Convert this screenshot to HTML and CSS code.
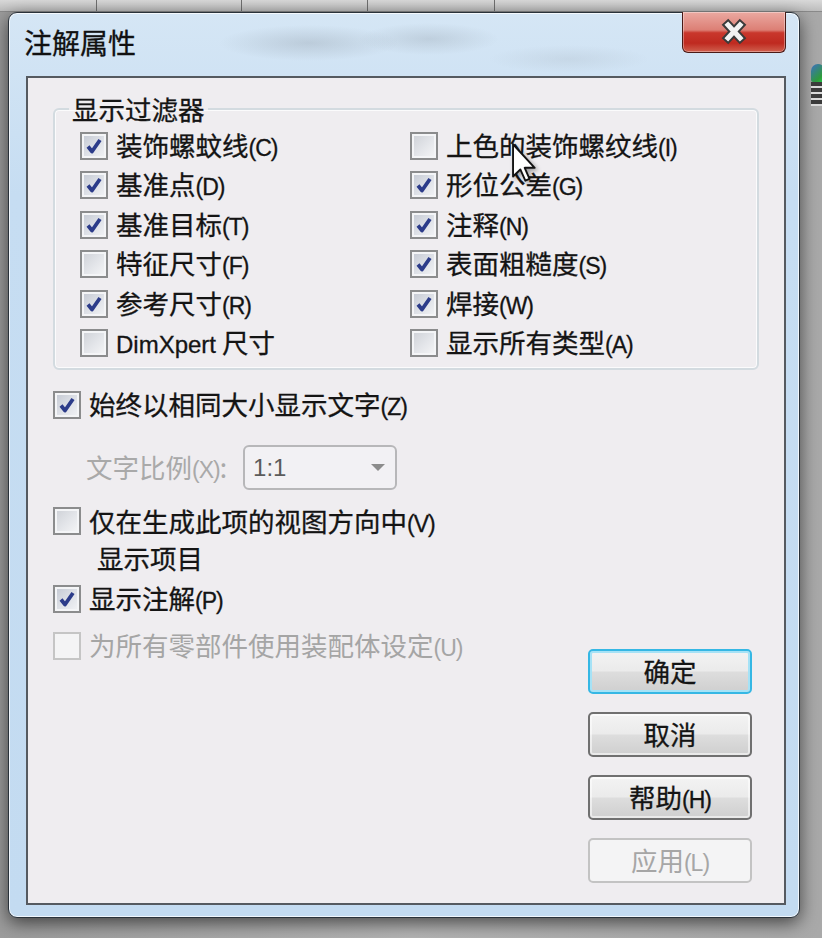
FILE: index.html
```html
<!DOCTYPE html>
<html lang="zh-CN">
<head>
  <meta charset="UTF-8">
  <meta name="viewport" content="width=device-width, initial-scale=1.0">
  <title>注解属性</title>
  <link rel="stylesheet" href="styles.css">
</head>
<body>
  <div class="desktop">
    <div class="taskstrip">
      <span class="tab tab-a"></span>
      <span class="tab tab-b"></span>
      <span class="tab tab-c"></span>
      <span class="tab tab-d"></span>
      <span class="tab tab-rest"></span>
    </div>
    <div class="side-icon"><span class="globe"></span><span class="sheet"></span></div>

    <div class="window">
      <div class="titlebar">
        <div class="title">注解属性</div>
        <div class="close">
          <svg width="104" height="41" viewBox="0 0 104 41">
            <path d="M46 14 L58 27 M58 14 L46 27" stroke="#3a3a3a" stroke-width="9" stroke-linecap="square" fill="none"/>
            <path d="M46 14 L58 27 M58 14 L46 27" stroke="#f2f2f2" stroke-width="5" stroke-linecap="square" fill="none"/>
          </svg>
        </div>
      </div>

      <div class="client">
        <fieldset class="group">
          <legend>显示过滤器</legend>
          <div class="filters">
            <label class="opt"><span class="cb"><svg viewBox="0 0 20 20"><path d="M4 10.5 L8 15.5 L16 4"/></svg></span><span class="txt">装饰螺蚊线<span class="key">(C)</span></span></label>
            <label class="opt"><span class="cb unchecked"></span><span class="txt">上色的装饰螺纹线<span class="key">(I)</span></span></label>
            <label class="opt"><span class="cb"><svg viewBox="0 0 20 20"><path d="M4 10.5 L8 15.5 L16 4"/></svg></span><span class="txt">基准点<span class="key">(D)</span></span></label>
            <label class="opt"><span class="cb"><svg viewBox="0 0 20 20"><path d="M4 10.5 L8 15.5 L16 4"/></svg></span><span class="txt">形位公差<span class="key">(G)</span></span></label>
            <label class="opt"><span class="cb"><svg viewBox="0 0 20 20"><path d="M4 10.5 L8 15.5 L16 4"/></svg></span><span class="txt">基准目标<span class="key">(T)</span></span></label>
            <label class="opt"><span class="cb"><svg viewBox="0 0 20 20"><path d="M4 10.5 L8 15.5 L16 4"/></svg></span><span class="txt">注释<span class="key">(N)</span></span></label>
            <label class="opt"><span class="cb unchecked"></span><span class="txt">特征尺寸<span class="key">(F)</span></span></label>
            <label class="opt"><span class="cb"><svg viewBox="0 0 20 20"><path d="M4 10.5 L8 15.5 L16 4"/></svg></span><span class="txt">表面粗糙度<span class="key">(S)</span></span></label>
            <label class="opt"><span class="cb"><svg viewBox="0 0 20 20"><path d="M4 10.5 L8 15.5 L16 4"/></svg></span><span class="txt">参考尺寸<span class="key">(R)</span></span></label>
            <label class="opt"><span class="cb"><svg viewBox="0 0 20 20"><path d="M4 10.5 L8 15.5 L16 4"/></svg></span><span class="txt">焊接<span class="key">(W)</span></span></label>
            <label class="opt"><span class="cb unchecked"></span><span class="txt"><span class="latin">DimXpert</span> 尺寸</span></label>
            <label class="opt"><span class="cb unchecked"></span><span class="txt">显示所有类型<span class="key">(A)</span></span></label>
          </div>
        </fieldset>

        <div class="lower">
          <div class="options">
            <label class="opt row-same"><span class="cb"><svg viewBox="0 0 20 20"><path d="M4 10.5 L8 15.5 L16 4"/></svg></span><span class="txt">始终以相同大小显示文字<span class="key">(Z)</span></span></label>

            <div class="scale-row">
              <span class="scale-label">文字比例<span class="key">(X)</span>:</span>
              <div class="combo"><span class="combo-value">1:1</span><span class="combo-arrow"></span></div>
            </div>

            <label class="opt multi"><span class="cb unchecked"></span><span class="txt">仅在生成此项的视图方向中<span class="key">(V)</span><span class="line2">显示项目</span></span></label>
            <label class="opt row-notes"><span class="cb"><svg viewBox="0 0 20 20"><path d="M4 10.5 L8 15.5 L16 4"/></svg></span><span class="txt">显示注解<span class="key">(P)</span></span></label>
            <label class="opt row-asm disabled"><span class="cb unchecked"></span><span class="txt">为所有零部件使用装配体设定<span class="key">(U)</span></span></label>
          </div>

          <div class="buttons">
            <button class="btn default">确定</button>
            <button class="btn">取消</button>
            <button class="btn">帮助<span class="key">(H)</span></button>
            <button class="btn disabled">应用<span class="key">(L)</span></button>
          </div>
        </div>

        <svg class="cursor" width="25" height="40" viewBox="0 0 12 19">
          <polygon points="0.5,0.5 0.5,16 4,12.6 6.4,18 8.4,17.1 6.1,11.8 10.9,11.8" fill="#fff" stroke="#111" stroke-width="0.9" stroke-linejoin="round"/>
        </svg>
      </div>
    </div>
  </div>
</body>
</html>
```

FILE: styles.css
```css
body {
  margin: 0;
  background: #b1b1b1;
  font-family: "Noto Sans CJK SC", sans-serif;
  color: #141414;
}

.desktop {
  width: 822px;
  height: 938px;
  overflow: hidden;
  position: relative;
  display: flex;
  flex-direction: column;
  background: linear-gradient(to right, #9c9c9c 0%, #b4b4b4 50%, #a9a9a9 100%);
}

/* strip of the app behind the dialog */
.taskstrip {
  height: 12px;
  display: flex;
  background: linear-gradient(#d9d9d9, #bdbdbd);
  border-bottom: 1px solid #8a8a8a;
  box-sizing: border-box;
}

.tab {
  border-right: 1px solid #6f6f6f;
}

.tab-a { width: 96px; }
.tab-b { width: 144px; }
.tab-c { width: 125px; }
.tab-d { width: 126px; }
.tab-rest { flex: 1; border-right: none; }

.side-icon {
  position: absolute;
  left: 811px;
  top: 64px;
  width: 14px;
  height: 44px;
}

.globe {
  display: block;
  width: 14px;
  height: 18px;
  border-radius: 7px 7px 2px 2px;
  background: linear-gradient(135deg, #3d6fc4 0%, #2f9a3c 70%, #1fd24a 100%);
}

.sheet {
  display: block;
  height: 24px;
  background: repeating-linear-gradient(#3b3b3b 0 4px, #d8d8d8 4px 6px);
}

/* dialog */
.window {
  margin-left: 8px;
  width: 792px;
  height: 906px;
  box-sizing: border-box;
  border: 1px solid #2a323a;
  border-radius: 9px;
  padding: 0 13px 12px 17px;
  display: flex;
  flex-direction: column;
  background:
    radial-gradient(ellipse 90px 18px at 300px 30px, rgba(120, 130, 140, 0.25), transparent),
    radial-gradient(ellipse 70px 16px at 420px 26px, rgba(120, 130, 140, 0.22), transparent),
    radial-gradient(ellipse 80px 14px at 560px 46px, rgba(150, 160, 170, 0.18), transparent),
    linear-gradient(#d5e6f5, #c6ddf2 20%, #c3dbf1);
  box-shadow: inset 0 0 0 1px rgba(255, 255, 255, 0.75), 0 5px 18px rgba(0, 0, 0, 0.6);
}

.titlebar {
  height: 63px;
  display: flex;
  justify-content: space-between;
  align-items: flex-start;
}

.title {
  margin: 15px 0 0 -2px;
  font-size: 28px;
  line-height: 1;
  color: #111;
  -webkit-text-stroke: 0.3px #111;
}

.close {
  margin-top: -1px;
  width: 104px;
  height: 41px;
  box-sizing: border-box;
  border: 1px solid #4a1a16;
  border-top: none;
  border-radius: 0 0 6px 6px;
  background: linear-gradient(#eba9a1 0%, #dc7f75 45%, #c9372c 52%, #bf2a20 78%, #d0604e 100%);
  box-shadow: inset 0 0 0 1px rgba(255, 255, 255, 0.35);
}

.close svg {
  display: block;
  margin: -1px 0 0 -1px;
}

.client {
  flex: 1;
  position: relative;
  display: flex;
  flex-direction: column;
  border: 2px solid #555a60;
  background: #efedf0;
}

/* filter group */
.group {
  margin: 16px 25px 0 25px;
  padding: 2px 0 5px 0;
  border: 2px solid #d3dbe0;
  border-radius: 6px;
  box-shadow: inset 0 0 0 1px #fbfbfc;
  min-width: 0;
}

.group legend {
  margin-left: 14px;
  padding: 0 3px;
  font-size: 26.5px;
  line-height: 30px;
  -webkit-text-stroke: 0.3px #141414;
}

.filters {
  display: grid;
  grid-template-columns: 330px 1fr;
  grid-auto-rows: 39.5px;
  padding-left: 25px;
}

.opt {
  display: flex;
  align-items: center;
  gap: 8px;
  font-size: 26.5px;
}

.txt {
  line-height: 1;
  white-space: nowrap;
  -webkit-text-stroke: 0.3px #141414;
}

.key {
  font-family: "Liberation Sans", "Noto Sans CJK SC", sans-serif;
  font-size: 23px;
  line-height: 1;
  letter-spacing: -1px;
}

.latin {
  font-family: "Liberation Sans", sans-serif;
  font-size: 24px;
}

/* checkbox */
.cb {
  flex: none;
  width: 28px;
  height: 28px;
  box-sizing: border-box;
  border: 2px solid #8b8c8d;
  background: linear-gradient(135deg, #c3c8d2 0%, #dfe2e8 55%, #f3f4f6 100%);
  box-shadow: inset 0 0 0 2px #f4f5f7;
  display: flex;
  align-items: center;
  justify-content: center;
}

.cb.unchecked {
  background: linear-gradient(135deg, #cdd0d6 0%, #e4e6ea 55%, #f6f6f7 100%);
}

.cb svg {
  width: 20px;
  height: 20px;
}

.cb path {
  fill: none;
  stroke: #2c3c8a;
  stroke-width: 3.8;
  stroke-linejoin: round;
}

.opt.disabled {
  color: #a5a5a5;
}

.opt.disabled .txt {
  -webkit-text-stroke: 0;
}

.opt.disabled .cb {
  border-color: #c5c5c5;
  background: #f4f4f5;
  box-shadow: none;
}

/* lower part */
.lower {
  flex: 1;
  display: flex;
}

.options {
  flex: 1;
  padding-left: 25px;
}

.options .opt {
  height: 40px;
}

.row-same {
  margin-top: 15px;
}

.scale-row {
  margin-top: 20px;
  display: flex;
  align-items: center;
  gap: 16px;
  padding-left: 33px;
}

.scale-label {
  font-size: 26.5px;
  line-height: 1;
  color: #a9a9a9;
  white-space: nowrap;
}

.combo {
  width: 154px;
  height: 45px;
  box-sizing: border-box;
  border: 2px solid #b7b7b9;
  border-radius: 6px;
  background: #f2f1f4;
  display: flex;
  align-items: center;
  justify-content: space-between;
  padding: 0 10px 0 8px;
}

.combo-value {
  font-family: "Liberation Sans", sans-serif;
  font-size: 24px;
  color: #5b5b5b;
}

.combo-arrow {
  width: 0;
  height: 0;
  border-left: 7px solid transparent;
  border-right: 7px solid transparent;
  border-top: 7px solid #8c8c8c;
}

.options .opt.multi {
  margin-top: 12px;
  height: auto;
  align-items: flex-start;
}

.multi .cb {
  margin-top: 4.5px;
}

.multi .txt {
  line-height: 37px;
}

.line2 {
  display: block;
  padding-left: 8px;
}

.row-notes {
  margin-top: 3px;
}

.row-asm {
  margin-top: 7px;
}

/* buttons */
.buttons {
  align-self: flex-end;
  display: flex;
  flex-direction: column;
  gap: 18px;
  margin-right: 32px;
  padding-bottom: 20px;
}

.btn {
  width: 164px;
  height: 45px;
  box-sizing: border-box;
  border: 2px solid #707070;
  border-radius: 5px;
  background: linear-gradient(#f3f3f3 0%, #ebebeb 48%, #dddddd 52%, #cfcfcf 100%);
  box-shadow: inset 0 0 0 2px rgba(255, 255, 255, 0.55);
  font-family: "Noto Sans CJK SC", sans-serif;
  font-size: 26.5px;
  line-height: 1;
  color: #141414;
  -webkit-text-stroke: 0.3px #141414;
  padding: 0;
}

.btn.default {
  border-color: #35b7e4;
  box-shadow: inset 0 0 0 2px #a6e2f6;
}

.btn.disabled {
  border-color: #c3c3c3;
  background: #f4f4f5;
  box-shadow: none;
  color: #a6a6a6;
  -webkit-text-stroke: 0;
}

.cursor {
  position: absolute;
  left: 484px;
  top: 65px;
  filter: blur(0.7px) drop-shadow(2px 2px 2px rgba(0, 0, 0, 0.35));
}
```
